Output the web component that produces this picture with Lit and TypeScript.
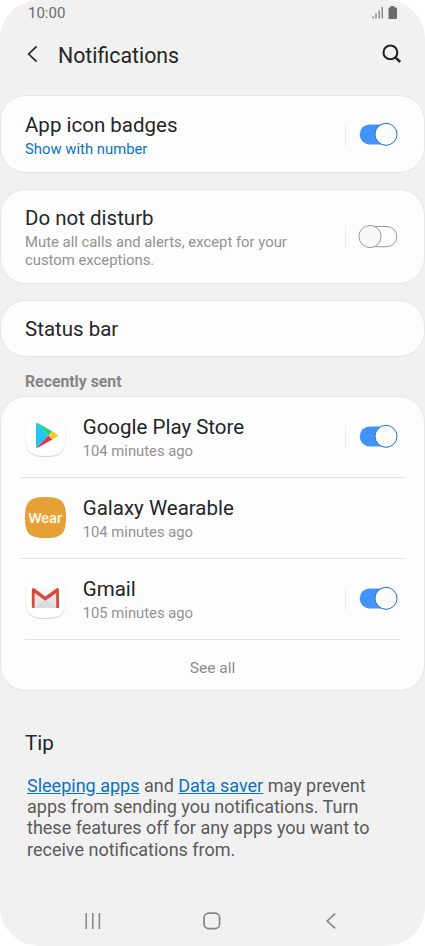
import { LitElement, html, css, svg, nothing } from "lit";
import { customElement, property } from "lit/decorators.js";
import { classMap } from "lit/directives/class-map.js";

@customElement("toggle-switch")
class ToggleSwitch extends LitElement {
  @property({ type: Boolean }) on = false;

  static styles = css`
    :host {
      display: flex;
      align-items: center;
      flex: none;
    }
    .rule {
      width: 1px;
      height: 23px;
      background: #ececec;
      margin-right: 12px;
    }
    svg {
      display: block;
    }
  `;

  render() {
    return html`
      <span class="rule"></span>
      <svg width="41" height="25" viewBox="0 0 41 25">
        ${this.on
          ? svg`<rect x="1.7" y="2.4" width="36" height="20" rx="10" fill="#4294fa" />
              <circle cx="28" cy="12.3" r="11" fill="#fcfcfc" stroke="#1d74c6" stroke-width="1" />`
          : svg`<rect x="4" y="2.5" width="34.8" height="20.2" rx="10.1" fill="#fdfdfd" stroke="#999" stroke-width="1" />
              <circle cx="12" cy="12.5" r="11.1" fill="#f8f8f8" stroke="#999" stroke-width="1" />`}
      </svg>
    `;
  }
}

const playIcon = svg`
  <path d="M11.3 7.7 L23.3 20 L11.3 32.3 Q10.7 32.1 10.7 31.1 V8.9 Q10.7 7.9 11.3 7.7Z" fill="#24c4f4" />
  <path d="M11.3 7.7 Q11.9 7.3 12.8 7.8 L27 16 L23.3 20Z" fill="#1fd47c" />
  <path d="M11.3 32.3 Q11.9 32.7 12.8 32.2 L27 24 L23.3 20Z" fill="#e2334c" />
  <path d="M27 16 L31.9 19 Q33.4 20 31.9 21 L27 24 L23.3 20Z" fill="#fdc713" />
`;

const gmailIcon = svg`
  <path d="M8 11 H32 V30.3 H8Z" fill="#e6e6e6" />
  <path d="M9 10.6 H31 L20 19.5Z" fill="#f6f6f6" />
  <path d="M20 22 L32 30.3 H8Z" fill="#dcdcdc" />
  <path d="M6.4 12.2 Q6.4 10.4 8.3 10.4 L20 19 L31.7 10.4 Q33.6 10.4 33.6 12.2 V30.3 H30.8 V15.3 L20 23.1 L9.2 15.3 V30.3 H8 Q6.4 30.3 6.4 28.8Z" fill="#d54b3f" />
`;

@customElement("app-icon")
class AppIcon extends LitElement {
  @property() kind = "";

  static styles = css`
    :host {
      display: block;
      flex: none;
      width: 42px;
      height: 42px;
    }
    svg {
      display: block;
    }
    .wear {
      font: 600 13.4px Inter, sans-serif;
    }
  `;

  render() {
    const tile = "M20 0 C35.5 0 40 4.5 40 20 C40 35.5 35.5 40 20 40 C4.5 40 0 35.5 0 20 C0 4.5 4.5 0 20 0Z";
    if (this.kind === "wear") {
      return html`<svg width="42" height="42" viewBox="0 0 42 42">
        <path d="M20.5 0 C36.5 0 41 4.4 41 20.6 C41 36.8 36.5 41.2 20.5 41.2 C4.5 41.2 0 36.8 0 20.6 C0 4.4 4.5 0 20.5 0Z" fill="#e5a135" />
        <text class="wear" x="20.3" y="26" text-anchor="middle" textLength="34" lengthAdjust="spacingAndGlyphs" fill="#fff8ea">Wear</text>
      </svg>`;
    }
    return html`<svg width="42" height="42" viewBox="0 0 42 42">
      <path d=${tile} transform="translate(.6 .9)" fill="#cbcbcb" />
      <path d=${tile} transform="translate(.6 0)" fill="#fff" stroke="#f1f1f1" stroke-width=".6" />
      ${this.kind === "play"
        ? svg`<g transform="translate(.3 -.6)">${playIcon}</g>`
        : svg`<g transform="translate(.4 -.4)">${gmailIcon}</g>`}
    </svg>`;
  }
}

const apps = [
  { kind: "play", name: "Google Play Store", when: "104 minutes ago", toggle: true },
  { kind: "wear", name: "Galaxy Wearable", when: "104 minutes ago", toggle: false },
  { kind: "gmail", name: "Gmail", when: "105 minutes ago", toggle: true },
];

@customElement("app-root")
class AppRoot extends LitElement {
  static styles = css`
    :host {
      display: block;
      height: 946px;
      background: #fff;
      font-family: Roboto, sans-serif;
      color: #252525;
    }
    * {
      box-sizing: border-box;
    }
    svg {
      display: block;
    }
    .screen {
      height: 946px;
      display: flex;
      flex-direction: column;
      background: #f1f1f1;
      border-radius: 39px;
      overflow: hidden;
    }
    .status {
      display: flex;
      justify-content: space-between;
      align-items: center;
      height: 26px;
      padding: 0 27px 0 28px;
      font-size: 15px;
      color: #6b6b6b;
    }
    .header {
      display: flex;
      align-items: center;
      height: 57px;
      padding: 0 23px 0 26px;
      margin-bottom: 12px;
    }
    .header svg {
      margin-bottom: 1px;
    }
    .header h1 {
      flex: 1;
      margin: 0 0 0 18px;
      padding-top: 2px;
      font-size: 21.3px;
      font-weight: 400;
      line-height: 26px;
    }
    .card {
      flex: none;
      background: #fdfdfd;
      border: 1px solid #e7e7e7;
      border-radius: 26px;
    }
    .setting {
      display: flex;
      align-items: center;
      padding: 0 25px 0 24px;
      margin-bottom: 16px;
    }
    .badges {
      height: 78px;
    }
    .badges .words {
      padding-top: 4px;
    }
    .dnd {
      height: 95px;
    }
    .dnd .words {
      padding-top: 1px;
    }
    .dnd .title {
      margin-bottom: 3px;
    }
    .bar {
      height: 57px;
      margin-bottom: 0;
    }
    .words {
      flex: 1;
    }
    .title {
      font-size: 20.5px;
      line-height: 26px;
    }
    .sub {
      font-size: 14.85px;
      line-height: 17.4px;
      color: #929292;
    }
    .sub.link {
      color: #0b72c9;
      line-height: 22px;
    }
    .section {
      height: 39px;
      padding: 15px 25px 0;
      font-size: 15.8px;
      line-height: 20px;
      font-weight: 700;
      color: #868686;
    }
    .list {
      height: 295px;
    }
    .row {
      display: flex;
      align-items: center;
      height: 81px;
      margin: 0 19px;
      padding: 0 6px 1px 5px;
      border-bottom: 1px solid #e2e2e2;
    }
    .row.last {
      margin: 0 24px;
      padding: 0 1px 1px 0;
    }
    .row .words {
      margin-left: 15.7px;
      padding-top: 3px;
    }
    .row .sub {
      font-size: 14.8px;
      line-height: 22px;
    }
    .more {
      height: 50px;
      padding-top: 3px;
      line-height: 50px;
      text-align: center;
      font-size: 15.5px;
      color: #8d8d8d;
    }
    .tip {
      padding: 38px 25px 0;
    }
    .tip h2 {
      margin: 0;
      font-size: 20.6px;
      font-weight: 400;
      line-height: 28px;
    }
    .tip p {
      margin: 18px 0 0 2px;
      font-size: 18px;
      line-height: 21.2px;
      color: #5a5a5a;
    }
    .tip a {
      color: #0b72c9;
      text-decoration: underline;
    }
    .nav {
      display: flex;
      justify-content: space-between;
      align-items: center;
      height: 50px;
      margin-top: auto;
      padding: 0 84.5px 0 83px;
    }
  `;

  render() {
    return html`
      <div class="screen">
        <div class="status">
          <span>10:00</span>
          <svg width="26" height="14" viewBox="0 0 26 14">
            <g stroke="#7c7c7c" stroke-width="1.3">
              <path d="M1 10.5 V12.5 M4 7.5 V12.5 M7.2 4.5 V12.5 M10.3 1 V12.5" />
            </g>
            <path d="M18.5 0 H22.5 V1.5 H24 Q25 1.5 25 2.5 V12 Q25 13 24 13 H17.5 Q16.5 13 16.5 12 V2.5 Q16.5 1.5 17.5 1.5 H18.5Z" fill="#6c6c6c" />
          </svg>
        </div>
        <div class="header">
          <svg width="14" height="18" viewBox="0 0 14 18" fill="none" stroke="#252525" stroke-width="1.7">
            <path d="M10.6 1.3 L2.7 9 L10.6 16.7" />
          </svg>
          <h1>Notifications</h1>
          <svg width="20" height="20" viewBox="0 0 20 20" fill="none" stroke="#252525" stroke-width="2.1">
            <circle cx="8.4" cy="8.4" r="6.9" />
            <path d="M13.2 13.2 L18.2 18" stroke-width="2.5" />
          </svg>
        </div>

        <div class="card setting badges">
          <div class="words">
            <div class="title">App icon badges</div>
            <div class="sub link">Show with number</div>
          </div>
          <toggle-switch on></toggle-switch>
        </div>
        <div class="card setting dnd">
          <div class="words">
            <div class="title">Do not disturb</div>
            <div class="sub">Mute all calls and alerts, except for your<br />custom exceptions.</div>
          </div>
          <toggle-switch></toggle-switch>
        </div>
        <div class="card setting bar"><div class="title">Status bar</div></div>

        <div class="section">Recently sent</div>
        <div class="card list">
          ${apps.map(
            (a, i) => html`
              <div class=${classMap({ row: true, last: i === apps.length - 1 })}>
                <app-icon kind=${a.kind}></app-icon>
                <div class="words">
                  <div class="title">${a.name}</div>
                  <div class="sub">${a.when}</div>
                </div>
                ${a.toggle ? html`<toggle-switch on></toggle-switch>` : nothing}
              </div>
            `
          )}
          <div class="more">See all</div>
        </div>

        <div class="tip">
          <h2>Tip</h2>
          <p>
            <a>Sleeping apps</a> and <a>Data saver</a> may prevent<br />apps from sending you notifications. Turn<br />these
            features off for any apps you want to<br />receive notifications from.
          </p>
        </div>

        <div class="nav">
          <svg width="18" height="18" viewBox="0 0 18 18" stroke="#868686" stroke-width="1.5">
            <path d="M3.2 1 V17 M9.8 1 V17 M16.4 1 V17" />
          </svg>
          <svg width="18" height="18" viewBox="0 0 18 18" fill="none" stroke="#868686" stroke-width="1.7">
            <rect x="1" y="1.2" width="15.6" height="15.4" rx="4.6" />
          </svg>
          <svg width="18" height="18" viewBox="0 0 18 18" fill="none" stroke="#868686" stroke-width="1.6">
            <path d="M12.2 1.7 L4.2 9 L12.2 16.3" />
          </svg>
        </div>
      </div>
    `;
  }
}
